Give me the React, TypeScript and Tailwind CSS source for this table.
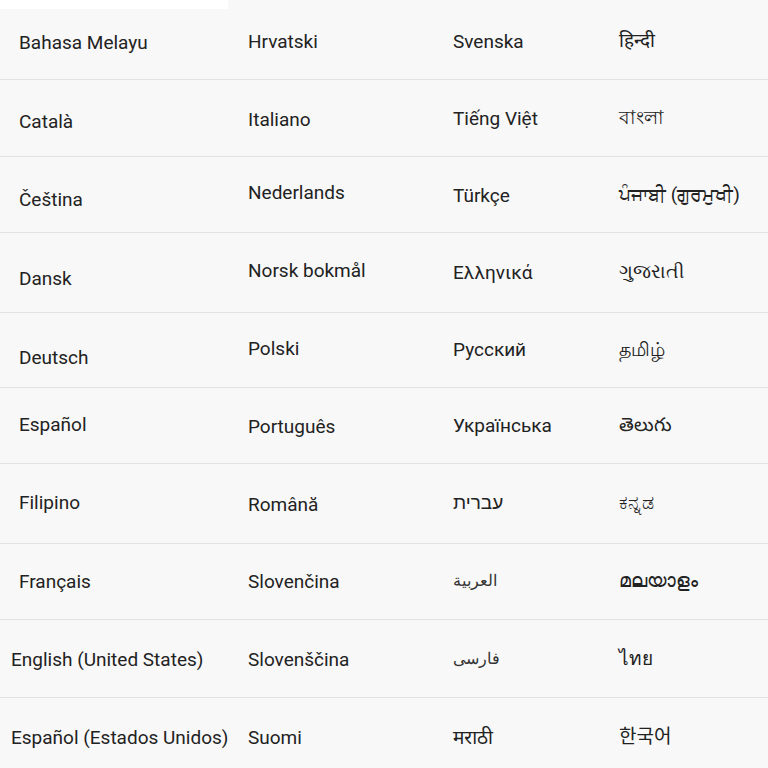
type Cell = { label: string; shift: string; size?: string };

// each row: height + 4 cells; shift nudges the label down (pt) or up (pb)
const rows: { h: string; pad: string; cells: Cell[] }[] = [
  {
    h: 'h-[80px]',
    pad: 'pl-[19px]',
    cells: [
      { label: 'Bahasa Melayu', shift: 'pt-[6px]' },
      { label: 'Hrvatski', shift: 'pt-[4px]' },
      { label: 'Svenska', shift: 'pt-[4px]' },
      { label: 'हिन्दी', shift: 'pt-[2px]' },
    ],
  },
  {
    h: 'h-[77px]',
    pad: 'pl-[19px]',
    cells: [
      { label: 'Català', shift: 'pt-[7px]' },
      { label: 'Italiano', shift: 'pt-[3px]' },
      { label: 'Tiếng Việt', shift: 'pt-[1px]' },
      { label: 'বাংলা', shift: 'pb-[1px]' },
    ],
  },
  {
    h: 'h-[76px]',
    pad: 'pl-[19px]',
    cells: [
      { label: 'Čeština', shift: 'pt-[10px]' },
      { label: 'Nederlands', shift: 'pb-[4px]' },
      { label: 'Türkçe', shift: 'pt-[2px]' },
      { label: 'ਪੰਜਾਬੀ (ਗੁਰਮੁਖੀ)', shift: 'pt-[0px]' },
    ],
  },
  {
    h: 'h-[80px]',
    pad: 'pl-[19px]',
    cells: [
      { label: 'Dansk', shift: 'pt-[12px]' },
      { label: 'Norsk bokmål', shift: 'pb-[4px]' },
      { label: 'Ελληνικά', shift: 'pt-[0px]' },
      { label: 'ગુજરાતી', shift: 'pb-[2px]' },
    ],
  },
  {
    h: 'h-[75px]',
    pad: 'pl-[19px]',
    cells: [
      { label: 'Deutsch', shift: 'pt-[15px]' },
      { label: 'Polski', shift: 'pb-[3px]' },
      { label: 'Русский', shift: 'pb-[1px]' },
      { label: 'தமிழ்', shift: 'pb-[1px]' },
    ],
  },
  {
    h: 'h-[76px]',
    pad: 'pl-[19px]',
    cells: [
      { label: 'Español', shift: 'pb-[2px]' },
      { label: 'Português', shift: 'pt-[2px]' },
      { label: 'Українська', shift: 'pt-[0px]' },
      { label: 'తెలుగు', shift: 'pb-[2px]' },
    ],
  },
  {
    h: 'h-[80px]',
    pad: 'pl-[19px]',
    cells: [
      { label: 'Filipino', shift: 'pb-[2px]' },
      { label: 'Română', shift: 'pt-[2px]' },
      { label: 'עברית', shift: 'pb-[2px]' },
      { label: 'ಕನ್ನಡ', shift: 'pb-[2px]' },
    ],
  },
  {
    h: 'h-[76px]',
    pad: 'pl-[19px]',
    cells: [
      { label: 'Français', shift: 'pt-[0px]' },
      { label: 'Slovenčina', shift: 'pt-[0px]' },
      { label: 'العربية', shift: 'pb-[2px]', size: 'text-[16px] text-[#333333]' },
      { label: 'മലയാളം', shift: 'pb-[2px]' },
    ],
  },
  {
    h: 'h-[78px]',
    pad: 'pl-[11px]',
    cells: [
      { label: 'English (United States)', shift: 'pt-[2px]' },
      { label: 'Slovenščina', shift: 'pt-[2px]' },
      { label: 'فارسی', shift: 'pt-[0px]', size: 'text-[16px] text-[#333333]' },
      { label: 'ไทย', shift: 'pt-[0px]' },
    ],
  },
  {
    h: 'h-[71px]',
    pad: 'pl-[11px]',
    cells: [
      { label: 'Español (Estados Unidos)', shift: 'pt-[7px]' },
      { label: 'Suomi', shift: 'pt-[7px]' },
      { label: 'मराठी', shift: 'pt-[7px]' },
      { label: '한국어', shift: 'pt-[5px]' },
    ],
  },
];

export default function App() {
  return (
    <div
      className="relative w-[768px] h-[768px] overflow-hidden bg-[#f8f8f8] text-[#222222] text-[19px]"
      style={{ fontFamily: 'Roboto, "Noto Sans", "Noto Sans CJK KR", sans-serif' }}
    >
      <div className="absolute left-0 top-0 w-[228px] h-[9px] bg-white" />
      {rows.map((row, i) => (
        <div
          key={i}
          className={`${row.h} grid grid-cols-[248px_205px_166px_1fr] ${
            i < rows.length - 1 ? 'border-b border-[#e2e2e2]' : ''
          }`}
        >
          {row.cells.map((c, j) => (
            <div
              key={j}
              className={`flex items-center whitespace-nowrap ${j === 0 ? row.pad : ''} ${c.shift}`}
            >
              <span dir="auto" className={`leading-none ${c.size ?? ''}`}>
                {c.label}
              </span>
            </div>
          ))}
        </div>
      ))}
    </div>
  );
}
